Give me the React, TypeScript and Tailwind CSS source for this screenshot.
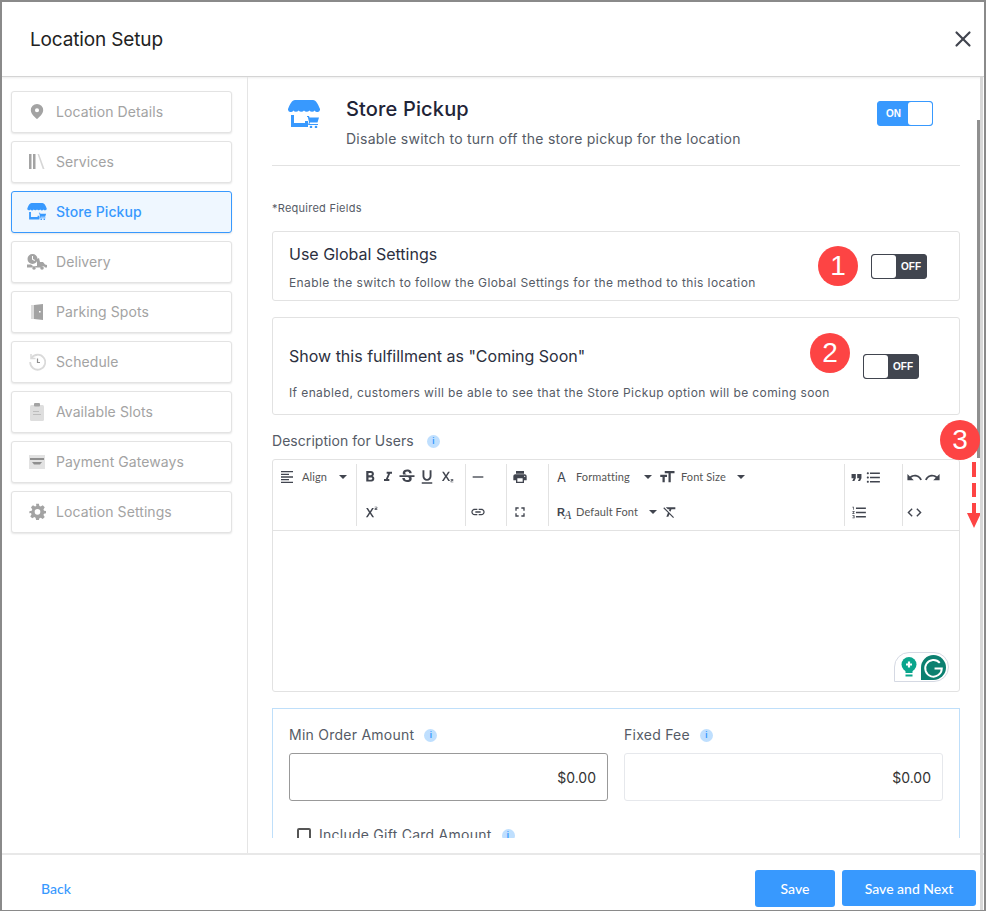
import { X } from "lucide-react";
import {
  MdCode,
  MdFormatAlignLeft,
  MdFormatBold,
  MdFormatClear,
  MdFormatItalic,
  MdFormatListBulleted,
  MdFormatListNumbered,
  MdFormatQuote,
  MdFormatSize,
  MdFormatUnderlined,
  MdFullscreen,
  MdHorizontalRule,
  MdLink,
  MdPrint,
  MdRedo,
  MdStrikethroughS,
  MdSubscript,
  MdSuperscript,
  MdUndo,
} from "react-icons/md";
import type { ReactNode } from "react";

function StoreIcon({ className }: { className: string }) {
  return (
    <svg viewBox="0 0 32 28" className={className} fill="currentColor">
      <path d="M7 0h18c3 0 5 4 7 9a2.800 2.800 0 0 1-5.300 1.500 3.400 3.400 0 0 1-5.300 0 3.400 3.400 0 0 1-5.400 0 3.400 3.400 0 0 1-5.400 0 3.400 3.400 0 0 1-5.300 0A2.800 2.800 0 0 1 0 9c2-5 4-9 7-9z" />
      <path d="M3 15h3v8h11v-2h3v6H3z" />
      <path d="M19 16h2l.5 1.500H31l-1.500 5H22l-.6 1.500H30v1H20l1-3-1.200-5H19z" />
      <circle cx="23" cy="27" r="1.300" />
      <circle cx="28" cy="27" r="1.300" />
    </svg>
  );
}

function PinIcon() {
  return (
    <svg viewBox="0 0 14 16" className="h-[15px] w-[14px]" fill="currentColor">
      <path fillRule="evenodd" d="M7 0a6.600 6.600 0 0 1 6.600 6.600C13.600 10.500 9 14.500 7 16 5 14.500.4 10.500.4 6.600A6.600 6.600 0 0 1 7 0zm0 4.500a2.200 2.200 0 1 0 0 4.400 2.200 2.200 0 0 0 0-4.400z" />
    </svg>
  );
}

function ServicesIcon() {
  return (
    <svg viewBox="0 0 16 15" className="h-[15px] w-[16px]">
      <rect x="0" y="0" width="2.500" height="15" fill="#a3a3a3" />
      <rect x="4" y="0" width="2.500" height="15" fill="#a3a3a3" />
      <path d="M8.500 0l1.500-.2L15.500 15l-1.700.2z" fill="#d6d6d6" />
    </svg>
  );
}

function DeliveryIcon() {
  return (
    <svg viewBox="0 0 20 16" className="h-[16px] w-[20px]" fill="#a3a3a3">
      <path fillRule="evenodd" d="M5.500 0a5 5 0 1 1 0 10 5 5 0 0 1 0-10zM5 2v3.500l2.500 1.400.5-.8-2-1.200V2z" />
      <path d="M0 10.500h4l2 1.500h4V5l2-1 1 4h3l2 2.500 2 .5v2.500h-2a2.200 2.200 0 0 0-4 0H9a2.200 2.200 0 0 0-4 0H0z" />
      <circle cx="7" cy="14" r="1.800" />
      <circle cx="15" cy="14" r="1.800" />
    </svg>
  );
}

function DoorIcon() {
  return (
    <svg viewBox="0 0 12 16" className="h-[16px] w-[12px]">
      <rect x="0" y="1" width="3" height="14" fill="#dcdcdc" />
      <path fillRule="evenodd" d="M3 1l9-1v16l-9-1zm5 6v1.600h1.600V7z" fill="#a3a3a3" />
    </svg>
  );
}

function ScheduleIcon() {
  return (
    <svg viewBox="0 0 18 18" className="h-[18px] w-[18px]" fill="none">
      <path d="M3.500 5a7.500 7.500 0 1 1-1.300 4" stroke="#dadada" strokeWidth="1.800" />
      <path d="M3 1v4.500h4.500" stroke="#dadada" strokeWidth="1.500" />
      <path d="M9.500 5.500V9.500H12" stroke="#8f8f8f" strokeWidth="1.200" />
    </svg>
  );
}

function SlotsIcon() {
  return (
    <svg viewBox="0 0 14 18" className="h-[18px] w-[14px]">
      <rect x="0" y="2" width="14" height="16" rx="1.500" fill="#dedede" />
      <rect x="4" y="0" width="6" height="3.500" rx="1" fill="#a3a3a3" />
      <rect x="3" y="8" width="6" height="1" fill="#bdbdbd" />
      <rect x="3" y="11" width="8" height="1" fill="#bdbdbd" />
    </svg>
  );
}

function GatewayIcon() {
  return (
    <svg viewBox="0 0 16 14" className="h-[14px] w-[16px]">
      <rect width="16" height="14" fill="#e2e2e2" />
      <rect x="1" y="3" width="14" height="2" fill="#8f8f8f" />
      <path d="M3 7h10l-2 2.500H5z" fill="#8f8f8f" />
    </svg>
  );
}

function GearIcon() {
  return (
    <svg viewBox="0 0 24 24" className="h-[17px] w-[17px]" fill="currentColor">
      <path fillRule="evenodd" d="M10 1h4l.7 3.300 1.800.8 2.900-1.800 2.800 2.800-1.800 2.900.8 1.800 3.300.7v3l-3.300.7-.8 1.800 1.800 2.900-2.800 2.800-2.900-1.800-1.800.8L14 24h-4l-.7-3.300-1.800-.8-2.900 1.800-2.800-2.800 1.800-2.900-.8-1.800L.5 14.500v-3l3.300-.7.800-1.800-1.800-2.900 2.800-2.800 2.900 1.800 1.800-.8zM12 8.500a4 4 0 1 0 0 8 4 4 0 0 0 0-8z" />
    </svg>
  );
}

const navItems: { label: string; icon: ReactNode; active?: boolean }[] = [
  { label: "Location Details", icon: <PinIcon /> },
  { label: "Services", icon: <ServicesIcon /> },
  { label: "Store Pickup", icon: <StoreIcon className="h-[17px] w-[20px]" />, active: true },
  { label: "Delivery", icon: <DeliveryIcon /> },
  { label: "Parking Spots", icon: <DoorIcon /> },
  { label: "Schedule", icon: <ScheduleIcon /> },
  { label: "Available Slots", icon: <SlotsIcon /> },
  { label: "Payment Gateways", icon: <GatewayIcon /> },
  { label: "Location Settings", icon: <GearIcon /> },
];

function Badge({ n }: { n: number }) {
  return (
    <div className="flex h-10 w-10 shrink-0 items-center justify-center rounded-full bg-[#fd4444] font-['Liberation_Sans',sans-serif] text-[28px] text-white">
      {n}
    </div>
  );
}

function Toggle({ on = false, className = "" }: { on?: boolean; className?: string }) {
  if (on) {
    return (
      <div className={`flex h-[25px] w-14 items-center justify-between rounded-[3px] border border-[#3899fe] bg-[#3899fe] ${className}`}>
        <span className="pl-2 font-['Liberation_Sans',sans-serif] text-[10px] font-bold text-white">ON</span>
        <span className="h-[23px] w-6 rounded-[3px] bg-white" />
      </div>
    );
  }
  return (
    <div className={`flex h-[25px] w-14 items-center justify-between rounded-[3px] border border-[#41454f] bg-[#41454f] ${className}`}>
      <span className="h-[23px] w-6 rounded-[3px] bg-white" />
      <span className="pr-[5px] font-['Liberation_Sans',sans-serif] text-[10px] font-bold text-white">OFF</span>
    </div>
  );
}

function Info({ className = "" }: { className?: string }) {
  return (
    <span className={`inline-flex h-[13px] w-[13px] items-center justify-center rounded-full bg-[#bfdffe] text-[8px] font-bold leading-none text-[#3899fe] ${className}`}>
      i
    </span>
  );
}

function Caret() {
  return <span className="h-0 w-0 border-x-[4px] border-t-[4px] border-x-transparent border-t-[#41454f]" />;
}

function Toolbar() {
  const row1 = "flex h-[26px] items-center";
  const row2 = "flex h-[44px] items-center";
  const ic = "h-[16px] w-[16px] shrink-0 text-[#41454f]";
  const tx = "text-[11px] tracking-[0.1px] text-[#555]";
  return (
    <div className="flex h-[71px] items-stretch border-b border-[#e2e2e2] py-[4px] font-['Lato',sans-serif]">
      <div className="w-[84px] border-r border-[#e2e2e2] pl-[6px]">
        <div className={row1}>
          <MdFormatAlignLeft className={ic} />
          <span className={`ml-[7px] ${tx}`}>Align</span>
          <span className="ml-[12px] flex"><Caret /></span>
        </div>
      </div>
      <div className="w-[109px] border-r border-[#e2e2e2] pl-[4px]">
        <div className={`${row1} gap-[1px]`}>
          <MdFormatBold className="h-[18px] w-[18px] shrink-0 text-[#41454f]" />
          <MdFormatItalic className={ic} />
          <MdStrikethroughS className="h-[20px] w-[20px] shrink-0 text-[#41454f]" />
          <MdFormatUnderlined className="h-[18px] w-[18px] shrink-0 text-[#41454f]" />
          <MdSubscript className="ml-[1px] h-[16px] w-[16px] shrink-0 text-[#41454f]" />
        </div>
        <div className={row2}><MdSuperscript className="ml-[1px] h-[16px] w-[16px] text-[#41454f]" /></div>
      </div>
      <div className="w-[41px] border-r border-[#e2e2e2] pl-[4px]">
        <div className={row1}><MdHorizontalRule className={ic} /></div>
        <div className={row2}><MdLink className={ic} /></div>
      </div>
      <div className="w-[42px] border-r border-[#e2e2e2] pl-[5px]">
        <div className={row1}><MdPrint className={ic} /></div>
        <div className={row2}><MdFullscreen className={ic} /></div>
      </div>
      <div className="w-[296px] border-r border-[#e2e2e2] pl-[8px]">
        <div className={row1}>
          <span className="w-[12px] font-['Inter',sans-serif] text-[13px] leading-none text-[#41454f]">A</span>
          <span className={`ml-[7px] w-[68px] ${tx}`}>Formatting</span>
          <Caret />
          <MdFormatSize className="ml-[6px] h-[18px] w-[18px] shrink-0 text-[#41454f]" />
          <span className={`ml-[5px] w-[56px] ${tx}`}>Font Size</span>
          <Caret />
        </div>
        <div className={row2}>
          <span className="flex w-[15px] items-end leading-none text-[#41454f]">
            <span className="font-['Liberation_Sans',sans-serif] text-[11px] font-bold">R</span>
            <span className="-ml-[1px] translate-y-[3px] font-['Liberation_Serif',serif] text-[12px] italic">A</span>
          </span>
          <span className={`ml-[4px] w-[73px] ${tx}`}>Default Font</span>
          <Caret />
          <MdFormatClear className={`ml-[5px] ${ic}`} />
        </div>
      </div>
      <div className="w-[58px] border-r border-[#e2e2e2] pl-[3px]">
        <div className={row1}>
          <MdFormatQuote className="h-[17px] w-[17px] shrink-0 text-[#41454f]" />
          <MdFormatListBulleted className="h-[17px] w-[17px] shrink-0 text-[#41454f]" />
        </div>
        <div className={`${row2} pl-[1px]`}><MdFormatListNumbered className="ml-[2px] h-[17px] w-[17px] text-[#41454f]" /></div>
      </div>
      <div className="pl-[3px]">
        <div className={`${row1} gap-[1px]`}>
          <MdUndo className="h-[17px] w-[17px] shrink-0 text-[#41454f]" />
          <MdRedo className="h-[17px] w-[17px] shrink-0 text-[#41454f]" />
        </div>
        <div className={row2}><MdCode className="h-[17px] w-[17px] text-[#41454f]" /></div>
      </div>
    </div>
  );
}

export default function App() {
  return (
    <div className="relative flex h-[911px] w-[986px] flex-col overflow-hidden border-x-2 border-t-2 border-b border-[#8a8a8a] bg-white font-['Inter',sans-serif]">
      <header className="flex h-[75px] shrink-0 items-center justify-between border-b border-[#d4d4d4] pl-[28px] pr-[8px] shadow-[0_1px_2px_rgba(0,0,0,0.08)]">
        <h1 className="pt-[2px] text-[19px] tracking-[-0.15px] text-[#222]">Location Setup</h1>
        <X className="h-[26px] w-[26px] text-[#41454f]" strokeWidth={2} />
      </header>

      <div className="flex min-h-0 flex-1">
        <aside className="flex w-[246px] shrink-0 flex-col gap-[8px] border-r border-[#e5e5e5] pl-[9px] pr-[15px] pt-[14px]">
          {navItems.map((item) => (
            <div
              key={item.label}
              className={`flex h-[42px] items-center rounded-[3px] border pb-[1px] text-[14px] tracking-[0.08px] shadow-[0_1px_2px_rgba(0,0,0,0.10)] ${
                item.active ? "border-[#3899fe] bg-[#eff7ff] font-medium text-[#3899fe]" : "border-[#e3e3e3] bg-white text-[#a3a3a3]"
              }`}
            >
              <span className="flex w-[44px] shrink-0 justify-center pl-[6px]">{item.icon}</span>
              {item.label}
            </div>
          ))}
        </aside>

        <main className="relative min-w-0 flex-1">
          <div className="h-[761px] overflow-hidden pl-[24px] pr-[24px]">
            <div className="flex h-[89px] items-start border-b border-[#e2e2e2] pr-[27px]">
              <StoreIcon className="ml-[16px] mt-[23px] h-[28px] w-[32px] text-[#3899fe]" />
              <div className="ml-[26px] mt-[18px] flex-1">
                <div className="text-[20px] font-medium leading-[28px] tracking-[0.15px] text-[#1f2437]">Store Pickup</div>
                <div className="mt-[6px] text-[14px] leading-[20px] tracking-[0.25px] text-[#555b66]">Disable switch to turn off the store pickup for the location</div>
              </div>
              <Toggle on className="mt-[24px]" />
            </div>

            <p className="mt-[35px] text-[11px] leading-[14px] tracking-[0.25px] text-[#555b66]">*Required Fields</p>

            <section className="mt-[16px] flex h-[70px] items-center justify-between rounded-[3px] border border-[#e2e2e2] pl-[16px] pr-[32px]">
              <div className="min-w-0 flex-1 pt-[1px]">
                <div className="text-[16px] leading-[24px] text-[#2c3040]">Use Global Settings</div>
                <div className="mt-[9px] whitespace-nowrap text-[12px] leading-[16px] tracking-[0.4px] text-[#555b66]">Enable the switch to follow the Global Settings for the method to this location</div>
              </div>
              <div className="flex shrink-0 items-center gap-[13px]">
                <Badge n={1} />
                <Toggle />
              </div>
            </section>

            <section className="mt-[16px] flex h-[98px] justify-between rounded-[3px] border border-[#e2e2e2] pl-[16px] pr-[40px]">
              <div className="min-w-0 flex-1">
                <div className="mt-[26px] text-[16px] leading-[24px] text-[#2c3040]">Show this fulfillment as "Coming Soon"</div>
                <div className="mt-[17px] whitespace-nowrap text-[12px] leading-[16px] tracking-[0.4px] text-[#555b66]">If enabled, customers will be able to see that the Store Pickup option will be coming soon</div>
              </div>
              <div className="mt-[15px] flex shrink-0 items-start gap-[13px]">
                <Badge n={2} />
                <Toggle className="mt-[21px]" />
              </div>
            </section>

            <div className="mt-[18px] flex items-center gap-[13px] text-[14px] leading-[16px] tracking-[0.05px] text-[#555b66]">
              Description for Users <Info />
            </div>

            <div className="mt-[10px] h-[233px] rounded-[3px] border border-[#e2e2e2]">
              <Toolbar />
              <div className="relative h-[160px]">
                <div className="absolute bottom-[9px] right-[10px] flex h-[30px] w-[55px] items-center justify-end gap-[4px] rounded-[15px] rounded-bl-none border border-[#d5d9e3] bg-white pr-[2px]">
                  <svg viewBox="0 0 16 20" className="h-[20px] w-[16px]">
                    <circle cx="8" cy="7.500" r="7.500" fill="#0aa58c" />
                    <path d="M8 4.500v6M5 7.500h6" stroke="#fff" strokeWidth="2.200" />
                    <path d="M4.500 13h7v3h-7z" fill="#0aa58c" />
                    <rect x="4.500" y="17.500" width="7" height="2" fill="#0aa58c" />
                  </svg>
                  <svg viewBox="0 0 24 24" className="h-[25px] w-[25px]">
                    <path d="M12 0a12 12 0 1 1 0 24H0V12A12 12 0 0 1 12 0z" fill="#0b8070" />
                    <path d="M18 7.500A8 8 0 1 0 20 13h-7" fill="none" stroke="#fff" strokeWidth="1.800" />
                  </svg>
                </div>
              </div>
            </div>

            <section className="mt-[16px] h-[200px] border border-[#bfdffa] px-[16px]">
              <div className="flex gap-[16px]">
                <div className="w-[319px]">
                  <div className="mt-[17px] flex items-center gap-[10px] text-[14px] leading-[18px] tracking-[0.25px] text-[#555b66]">Min Order Amount <Info /></div>
                  <div className="mt-[9px] flex h-[48px] items-center justify-end rounded-[3px] border border-[#999] pr-[11px] text-[14px] text-[#333]">$0.00</div>
                </div>
                <div className="w-[319px]">
                  <div className="mt-[17px] flex items-center gap-[10px] text-[14px] leading-[18px] tracking-[0.25px] text-[#555b66]">Fixed Fee <Info /></div>
                  <div className="mt-[9px] flex h-[48px] items-center justify-end rounded-[3px] border border-[#e6e8ec] pr-[11px] text-[14px] text-[#333]">$0.00</div>
                </div>
              </div>
              <div className="ml-[8px] mt-[25px] flex items-center gap-[8px] text-[14px] leading-[18px] tracking-[0.25px] text-[#555b66]">
                <span className="h-[14px] w-[14px] rounded-[2px] border-2 border-[#555]" />
                Include Gift Card Amount <Info className="ml-[2px]" />
              </div>
            </section>
          </div>

          <div className="absolute right-[4px] top-[43px] h-[338px] w-[3px] bg-[#8f8f8f]" />
          <div className="absolute right-[4px] top-[343px]">
            <Badge n={3} />
          </div>
          <div className="absolute right-[3px] top-[385px] flex w-[15px] flex-col items-center">
            <div className="h-[15px] w-[4px] bg-[#fd4444]" />
            <div className="mt-[6px] h-[14px] w-[4px] bg-[#fd4444]" />
            <div className="mt-[6px] h-[10px] w-[4px] bg-[#fd4444]" />
            <div className="h-0 w-0 border-x-[7.500px] border-t-[15px] border-x-transparent border-t-[#fd4444]" />
          </div>
        </main>
      </div>

      <footer className="relative z-10 flex h-[57px] shrink-0 items-center justify-between border-t-2 border-[#e8e8e8] bg-white pl-[39px] pr-[8px] pt-[11px] font-['Lato',sans-serif]">
        <span className="text-[14px] font-medium text-[#3899fe]">Back</span>
        <div className="flex items-center gap-[7px]">
          <button className="h-[37px] w-[80px] rounded-[3px] bg-[#3899fe] text-[14px] font-medium text-white">Save</button>
          <button className="h-[36px] w-[134px] rounded-[3px] bg-[#3899fe] text-[14px] font-medium text-white">Save and Next</button>
        </div>
      </footer>

      <div className="absolute bottom-0 right-[1px] top-[75px] z-20 w-[3px] bg-[#d8d8d8]" />
    </div>
  );
}
